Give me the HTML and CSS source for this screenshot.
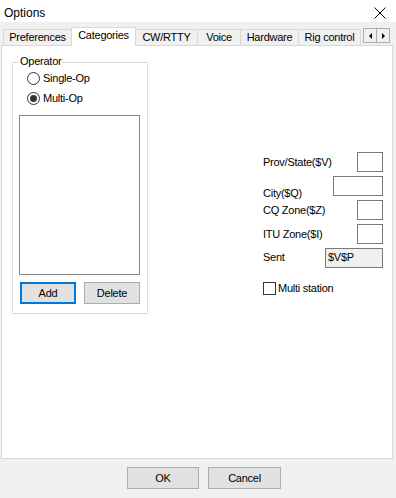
FILE: index.html
```html
<!DOCTYPE html>
<html>
<head>
<meta charset="utf-8">
<link rel="stylesheet" href="styles.css">
</head>
<body>
<div class="window">
  <div class="titlebar">
    <span class="title">Options</span>
    <svg class="close" width="12" height="12" viewBox="0 0 12 12"><path d="M0.5 0.5 L11.5 11.5 M11.5 0.5 L0.5 11.5" stroke="#000" stroke-width="1" fill="none"/></svg>
  </div>
  <div class="dialog">
    <div class="tabs">
      <div class="tab w-pref">Preferences</div>
      <div class="tab active w-cat">Categories</div>
      <div class="tab w-cw">CW/RTTY</div>
      <div class="tab w-voice">Voice</div>
      <div class="tab w-hw">Hardware</div>
      <div class="tab w-rig">Rig control</div>
      <div class="scroller">
        <span class="sbtn"><span class="arr-left"></span></span>
        <span class="sbtn"><span class="arr-right"></span></span>
      </div>
    </div>
    <div class="panel">
      <div class="group">
        <span class="legend">Operator</span>
        <div class="radio"><span class="rc"></span><span>Single-Op</span></div>
        <div class="radio"><span class="rc checked"></span><span>Multi-Op</span></div>
        <div class="listbox"></div>
        <div class="gbtns">
          <div class="btn focus">Add</div>
          <div class="btn">Delete</div>
        </div>
      </div>
      <div class="fields">
        <div class="fgrid">
          <div class="labels">
            <span class="lbl l-prov">Prov/State($V)</span>
            <span class="lbl l-city">City($Q)</span>
            <span class="lbl l-cq">CQ Zone($Z)</span>
            <span class="lbl l-itu">ITU Zone($I)</span>
            <span class="lbl l-sent">Sent</span>
          </div>
          <div class="inputs">
            <div class="edit w-s"></div>
            <div class="edit w-m"></div>
            <div class="edit w-s"></div>
            <div class="edit w-s"></div>
            <div class="edit w-l ro">$V$P</div>
          </div>
        </div>
        <div class="check"><span class="cb"></span><span>Multi station</span></div>
      </div>
    </div>
    <div class="footer">
      <div class="btn fbtn">OK</div>
      <div class="btn fbtn">Cancel</div>
    </div>
  </div>
</div>
</body>
</html>
```
FILE: styles.css
```css
* { box-sizing: border-box; }
html, body { margin: 0; padding: 0; }
body {
  width: 396px;
  height: 498px;
  overflow: hidden;
  font-family: "Liberation Sans", Arial, sans-serif;
  font-size: 11px;
  letter-spacing: -0.25px;
  color: #000;
  background: #f0f0f0;
}
.window { width: 396px; height: 498px; display: flex; flex-direction: column; }

.titlebar {
  height: 22px;
  background: #fff;
  display: flex;
  align-items: flex-start;
  padding-left: 4px;
  padding-top: 6px;
}
.title { font-size: 12px; letter-spacing: 0; line-height: 14px; }
.close { margin-left: auto; margin-right: 10px; margin-top: 1px; }

.dialog { flex: 1; display: flex; flex-direction: column; background: #f0f0f0; }

.tabs {
  margin-top: 5px;
  height: 19px;
  padding-left: 3px;
  display: flex;
  align-items: flex-end;
  position: relative;
  z-index: 1;
}
.tab {
  height: 16px;
  margin-bottom: 1px;
  margin-left: -1px;
  border: 1px solid #d9d9d9;
  border-bottom: none;
  background: #f0f0f0;
  display: flex;
  align-items: center;
  justify-content: center;
  line-height: 13px;
  white-space: nowrap;
}
.tab:first-child { margin-left: 0; }
.tab.active {
  height: 19px;
  margin-bottom: 0;
  background: #fff;
  padding-bottom: 3px;
}
.w-pref { width: 69px; }
.w-cat { width: 65px; }
.w-cw { width: 63px; }
.w-voice { width: 44px; }
.w-hw { width: 59px; }
.w-rig { width: 63px; }

.scroller { display: flex; margin-left: 2px; margin-bottom: 3px; }
.sbtn {
  width: 14px;
  height: 15px;
  border: 1px solid #adadad;
  background: #f0f0f0;
  display: flex;
  align-items: center;
  justify-content: center;
}
.sbtn + .sbtn { margin-left: -1px; }
.arr-left { width: 0; height: 0; border-top: 3px solid transparent; border-bottom: 3px solid transparent; border-right: 3px solid #000; }
.arr-right { width: 0; height: 0; border-top: 3px solid transparent; border-bottom: 3px solid transparent; border-left: 3px solid #000; }

.panel {
  margin-top: -1px;
  margin-left: 1px;
  width: 392px;
  height: 414px;
  border: 1px solid #d9d9d9;
  background: #fff;
  display: flex;
  align-items: flex-start;
  padding-left: 10px;
}

.group {
  position: relative;
  margin-top: 16px;
  width: 136px;
  border: 1px solid #dcdcdc;
  padding: 5px 0 9px 0;
}
.legend {
  position: absolute;
  top: -8px;
  left: 6px;
  background: #fff;
  padding: 0 1px;
  line-height: 13px;
}
.radio {
  height: 20px;
  display: flex;
  align-items: center;
  padding-left: 14px;
  gap: 3px;
  line-height: 13px;
}
.rc {
  width: 13px;
  height: 13px;
  border: 1px solid #333;
  border-radius: 50%;
  background: #fff;
  display: flex;
  align-items: center;
  justify-content: center;
}
.rc.checked::after {
  content: "";
  width: 7px;
  height: 7px;
  border-radius: 50%;
  background: #333;
}
.listbox {
  margin-top: 7px;
  margin-left: 6px;
  width: 121px;
  height: 160px;
  border: 1px solid #828790;
  background: #fff;
}
.gbtns { display: flex; gap: 8px; margin-top: 7px; padding-left: 7px; }
.btn {
  width: 56px;
  height: 22px;
  border: 1px solid #adadad;
  background: #e1e1e1;
  display: flex;
  align-items: center;
  justify-content: center;
  line-height: 13px;
}
.btn.focus { border: 2px solid #0078d7; }

.fields {
  margin-left: auto;
  margin-right: 9px;
  margin-top: 106px;
  width: 120px;
}
.fgrid { display: grid; grid-template-columns: 1fr; grid-template-rows: auto; }
.labels { grid-area: 1 / 1; justify-self: start; display: flex; flex-direction: column; }
.lbl { line-height: 13px; white-space: nowrap; }
.l-prov { margin-top: 4px; }
.l-city { margin-top: 18px; }
.l-cq { margin-top: 4px; }
.l-itu { margin-top: 11px; }
.l-sent { margin-top: 10px; }
.inputs { grid-area: 1 / 1; justify-self: end; display: flex; flex-direction: column; align-items: flex-end; gap: 4px; }
.edit {
  height: 20px;
  border: 1px solid #7a7a7a;
  background: #fff;
  line-height: 13px;
  padding: 2px 0 0 2px;
}
.edit.ro { background: #f0f0f0; }
.w-s { width: 26px; }
.w-m { width: 50px; }
.w-l { width: 58px; }

.check {
  margin-top: 14px;
  display: flex;
  align-items: center;
  gap: 2px;
  line-height: 13px;
}
.cb { width: 13px; height: 13px; border: 1px solid #333; background: #fff; }

.footer {
  display: flex;
  gap: 9px;
  padding-left: 127px;
  padding-top: 8px;
}
.fbtn { width: 72px; }
.fbtn + .fbtn { width: 73px; }
```
